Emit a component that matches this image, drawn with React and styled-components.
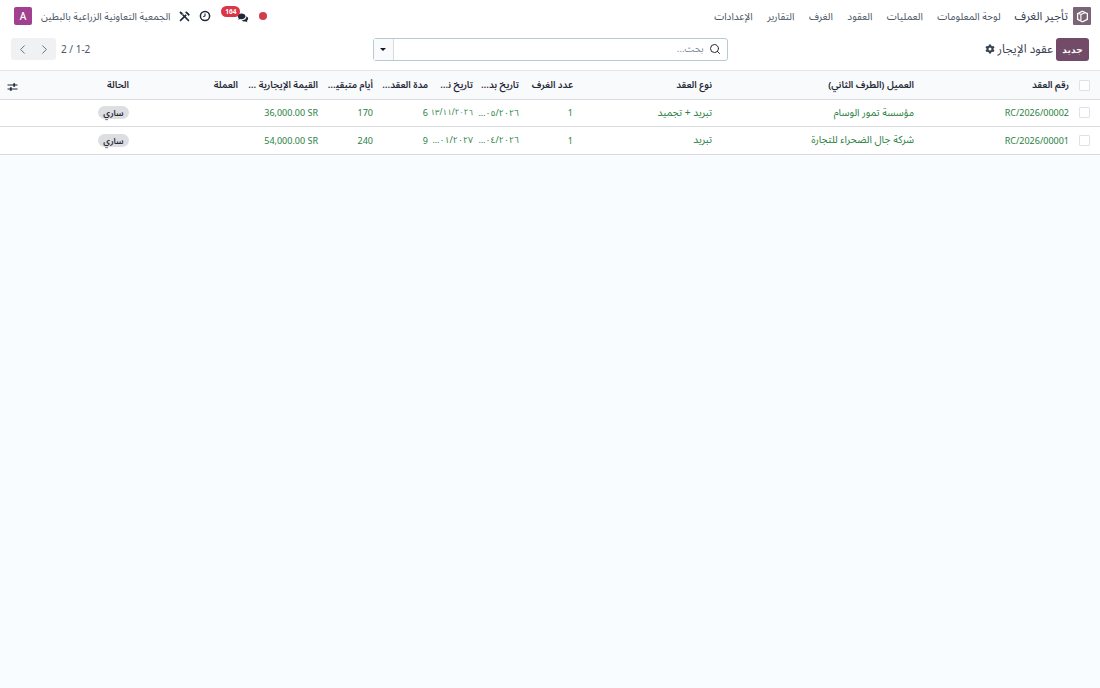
import React from "react";
import styled, { createGlobalStyle } from "styled-components";
import { Search, ChevronLeft, ChevronRight } from "lucide-react";

const Global = createGlobalStyle`
  html, body { margin: 0; padding: 0; height: 100%; background: #f9fcff; }
  #root { height: 100%; }
  * { box-sizing: border-box; }
  body { font-family: "Noto Sans", "Noto Sans Arabic", "DejaVu Sans", sans-serif; font-size: 10px; color: #374151; }
`;

const Page = styled.div`
  direction: rtl;
  width: 1100px;
  height: 688px;
  display: flex;
  flex-direction: column;
  overflow: hidden;
`;

const Navbar = styled.header`
  height: 32px;
  background: #fff;
  display: flex;
  align-items: center;
  justify-content: space-between;
  padding: 0 9px 0 14px;
`;
const NavStart = styled.nav`
  display: flex;
  align-items: center;
`;
const BrandIcon = styled.span`
  width: 18px;
  height: 18px;
  margin-left: 5px;
  background: #7a6576;
  border-radius: 1px;
  display: flex;
  align-items: center;
  justify-content: center;
`;
const Brand = styled.span`
  font-size: 11.7px;
  color: #374151;
  margin-left: 14px;
`;
const NavLink = styled.a`
  font-size: 10.15px;
  color: #4b5563;
  margin-left: 14.5px;
`;
const NavEnd = styled.div`
  display: flex;
  align-items: center;
`;
const Dot = styled.span`
  width: 8px;
  height: 8px;
  border-radius: 50%;
  background: #cf3f4b;
  margin-left: 10px;
`;
const Chat = styled.span`
  position: relative;
  width: 12px;
  height: 12px;
  margin-left: 26px;
  display: flex;
  top: 2px;
`;
const Badge = styled.span`
  position: absolute;
  top: -6px;
  right: 9px;
  width: 19px;
  height: 11px;
  border-radius: 6px;
  background: #dc3545;
  color: #fff;
  font-size: 6.5px;
  font-weight: 700;
  line-height: 11px;
  text-align: center;
  direction: ltr;
`;
const IconSlot = styled.span`
  display: flex;
  margin-left: ${(p) => p.$gap}px;
  color: #1f2937;
`;
const Company = styled.span`
  font-size: 10px;
  color: #4b5563;
  margin-left: 9px;
`;
const Avatar = styled.span`
  width: 18px;
  height: 18px;
  border-radius: 2px;
  background: #a1408f;
  color: #fff;
  font-size: 10px;
  font-weight: 500;
  display: flex;
  align-items: center;
  justify-content: center;
`;

const Control = styled.div`
  height: 39px;
  background: #fff;
  display: grid;
  grid-template-columns: 1fr 355px 1fr;
  align-items: center;
  padding: 0 11px 4px;
  border-bottom: 1px solid #e5e7eb;
`;
const TitleGroup = styled.div`
  display: flex;
  align-items: center;
`;
const NewButton = styled.button`
  width: 33px;
  height: 23px;
  border: 0;
  border-radius: 3px;
  background: #714b67;
  color: #fff;
  font: 700 9px "Noto Sans", "DejaVu Sans", sans-serif;
  padding: 0;
  margin-left: 3px;
`;
const Title = styled.span`
  font-size: 12px;
  color: #374151;
  margin-left: 3px;
`;
const SearchBox = styled.div`
  height: 23px;
  border: 1px solid #b5cbd0;
  border-radius: 3px;
  display: flex;
  align-items: center;
  background: #fff;
  padding-right: 6px;
`;
const SearchInput = styled.span`
  flex: 1;
  font-size: 9.5px;
  color: #7b8494;
  margin-right: 5px;
`;
const Caret = styled.span`
  width: 20px;
  height: 21px;
  border-right: 1px solid #d8dadd;
  background: #f9fafb;
  display: flex;
  align-items: center;
  justify-content: center;
  &::after {
    content: "";
    border-top: 3px solid #111827;
    border-left: 3px solid transparent;
    border-right: 3px solid transparent;
  }
`;
const Pager = styled.div`
  display: flex;
  align-items: center;
  justify-content: flex-end;
  gap: 5px;
`;
const PagerText = styled.span`
  font-size: 10px;
  color: #4b5563;
`;
const PagerButtons = styled.div`
  display: flex;
  background: #eff1f3;
  border-radius: 3px;
  height: 22px;
`;
const PagerButton = styled.span`
  width: 22.5px;
  display: flex;
  align-items: center;
  justify-content: center;
  color: #4b5563;
`;

const Table = styled.table`
  width: 1100px;
  table-layout: fixed;
  border-collapse: collapse;
  background: #fff;
`;
const Th = styled.th`
  height: 28px;
  padding: 1px 4px 0;
  background: #f9fafb;
  border-bottom: 1px solid #d8dadd;
  font-size: 9.5px;
  font-weight: 600;
  color: #1f2937;
  text-align: ${(p) => p.$align || "right"};
  white-space: nowrap;
  overflow: hidden;
  text-overflow: ellipsis;
`;
const sizes = { arabic: "10.2px", date: "8.8px", full: "8px", latin: "9px" };
const spacings = { date: "-0.3px", full: "-0.7px" };
const Td = styled.td`
  height: 27.5px;
  padding: 0 4px 0 ${(p) => (p.$kind === "date" || p.$kind === "full" ? "0" : "4px")};
  border-bottom: 1px solid #d8dadd;
  font-size: ${(p) => sizes[p.$kind] || "9px"};
  letter-spacing: ${(p) => spacings[p.$kind] || "0"};
  color: #28813f;
  text-align: right;
  white-space: nowrap;
  overflow: ${(p) => (p.$kind === "full" ? "visible" : "hidden")};
  text-overflow: ${(p) => (p.$kind === "full" ? "clip" : "ellipsis")};
`;
const Latin = styled.span`
  direction: ltr;
  unicode-bidi: embed;
`;
const Check = styled.span`
  display: block;
  width: 11px;
  height: 11px;
  margin-right: 6px;
  border: 1px solid #dfe2e6;
  border-radius: 1px;
  background: #fff;
`;
const Pill = styled.span`
  display: inline-block;
  width: 31px;
  height: 13px;
  border-radius: 7px;
  background: #dcdee1;
  color: #1f2937;
  font-size: 8.5px;
  font-weight: 600;
  line-height: 13px;
  text-align: center;
`;
const SliderSlot = styled.span`
  display: flex;
  justify-content: flex-end;
  margin-left: 3px;
  position: relative;
  top: 2px;
`;

const widths = [27, 155, 202, 139, 54, 46, 45, 55, 55, 80, 109, 103, 30];
const heads = ["رقم العقد", "العميل (الطرف الثاني)", "نوع العقد", "عدد الغرف", "تاريخ بدء العقد", "تاريخ نهاية العقد", "مدة العقد (شهر)", "أيام متبقية للعقد", "القيمة الإيجارية الإجمالية", "العملة", "الحالة"];
const rows = [
  ["RC/2026/00002", "مؤسسة تمور الوسام", "تبريد + تجميد", "1", "١٣/٠٥/٢٠٢٦", "١٣/١١/٢٠٢٦", "6", "170", "36,000.00 SR"],
  ["RC/2026/00001", "شركة جال الضحراء للتجارة", "تبريد", "1", "٠١/٠٤/٢٠٢٦", "٠١/٠١/٢٠٢٧", "9", "240", "54,000.00 SR"],
];

const BoxLogo = () => (
  <svg width="13" height="13" viewBox="0 0 16 16" fill="none">
    <path d="M8 1.5 14 4.5v7L8 14.5 2 11.5v-7z" stroke="#fff" strokeWidth="1.6" />
    <path d="M6 5.5 11 3.5M6 5.5v7M6 5.5 2.5 4" stroke="#fff" strokeWidth="1.4" />
  </svg>
);
const Comments = () => (
  <svg width="13" height="12" viewBox="0 0 13 12">
    <path d="M5 1C2.5 1 .8 2.4.8 4.2c0 .9.4 1.6 1.1 2.2L1.4 8l1.9-.8c.5.1 1.1.2 1.7.2 2.4 0 4.2-1.4 4.2-3.2S7.4 1 5 1z" fill="#1f2937" />
    <path d="M10.1 4c.1.2.1.4.1.6 0 2.2-2.2 3.9-4.9 3.9h-.2c.7.9 1.9 1.4 3.2 1.4.4 0 .8 0 1.2-.1l1.7.8-.4-1.5c.8-.6 1.3-1.3 1.3-2.2 0-1.3-.8-2.3-2-2.9z" fill="#1f2937" />
  </svg>
);
const Clock = () => (
  <svg width="12" height="12" viewBox="0 0 12 12" fill="none" stroke="#1f2937">
    <circle cx="6" cy="6" r="4.6" strokeWidth="1.5" />
    <path d="M6 3.4V6L4.2 6.8" strokeWidth="1.1" />
  </svg>
);
const Tools = () => (
  <svg width="11" height="11" viewBox="0 0 12 12" fill="none" stroke="#1f2937">
    <path d="M1.2 10.8 7.8 4.2" strokeWidth="1.7" />
    <path d="M6.8 1.4 10.6 5.2l.9-1.3L8.5.9z" fill="#1f2937" strokeWidth=".5" />
    <path d="M10.8 10.8 3.8 3.8" strokeWidth="1.7" />
    <path d="M1 1.2 2.2.8l2 2-1.3 1.3-2-2z" fill="#1f2937" strokeWidth=".5" />
  </svg>
);
const Gear = () => (
  <svg width="10" height="10" viewBox="0 0 10 10">
    <path fillRule="evenodd" fill="#374151" d="M4 .5h2l.3 1.3.9.5 1.3-.4 1 1.7-1 .9v1l1 .9-1 1.7-1.3-.4-.9.5L6 9.5H4l-.3-1.3-.9-.5-1.3.4-1-1.7 1-.9v-1l-1-.9 1-1.7 1.3.4.9-.5zM5 3.5a1.5 1.5 0 1 0 0 3 1.5 1.5 0 0 0 0-3z" />
  </svg>
);
const Sliders = () => (
  <svg width="11" height="10" viewBox="0 0 11 10" fill="none" stroke="#1f2937">
    <path d="M.5 3h10M.5 7h10" strokeWidth="1" />
    <path d="M7.2 1.2v3.6M3.8 5.2v3.6" strokeWidth="1.8" />
  </svg>
);

const cellKind = (s) => {
  if (s === "١٣/١١/٢٠٢٦") return "full";
  if (/[٠-٩]/.test(s)) return "date";
  return /^[\dA-Z,./ ]+$/.test(s) ? "latin" : "arabic";
};

export default function App() {
  return (
    <Page>
      <Global />
      <Navbar>
        <NavStart>
          <BrandIcon><BoxLogo /></BrandIcon>
          <Brand>تأجير الغرف</Brand>
          <NavLink>لوحة المعلومات</NavLink>
          <NavLink>العمليات</NavLink>
          <NavLink>العقود</NavLink>
          <NavLink>الغرف</NavLink>
          <NavLink>التقارير</NavLink>
          <NavLink>الإعدادات</NavLink>
        </NavStart>
        <NavEnd>
          <Dot />
          <Chat><Comments /><Badge>164</Badge></Chat>
          <IconSlot $gap={9}><Clock /></IconSlot>
          <IconSlot $gap={9}><Tools /></IconSlot>
          <Company>الجمعية التعاونية الزراعية بالبطين</Company>
          <Avatar>A</Avatar>
        </NavEnd>
      </Navbar>
      <Control>
        <TitleGroup>
          <NewButton>جديد</NewButton>
          <Title>عقود الإيجار</Title>
          <Gear />
        </TitleGroup>
        <SearchBox>
          <Search size={12} color="#1f2937" strokeWidth={2} />
          <SearchInput>بحث...</SearchInput>
          <Caret />
        </SearchBox>
        <Pager>
          <PagerText>1-2 / 2</PagerText>
          <PagerButtons>
            <PagerButton><ChevronRight size={15} strokeWidth={1.3} /></PagerButton>
            <PagerButton><ChevronLeft size={15} strokeWidth={1.3} /></PagerButton>
          </PagerButtons>
        </Pager>
      </Control>
      <Table>
        <colgroup>
          {widths.map((w, i) => <col key={i} style={{ width: w }} />)}
        </colgroup>
        <thead>
          <tr>
            <Th><Check /></Th>
            {heads.map((h) => <Th key={h}>{h}</Th>)}
            <Th $align="left"><SliderSlot><Sliders /></SliderSlot></Th>
          </tr>
        </thead>
        <tbody>
          {rows.map((r) => (
            <tr key={r[0]}>
              <Td><Check /></Td>
              {r.map((c, i) => {
                const kind = cellKind(c);
                return (
                  <Td key={i} $kind={kind}>
                    {kind === "arabic" ? c : <Latin>{c}</Latin>}
                  </Td>
                );
              })}
              <Td />
              <Td><Pill>ساري</Pill></Td>
              <Td />
            </tr>
          ))}
        </tbody>
      </Table>
    </Page>
  );
}
